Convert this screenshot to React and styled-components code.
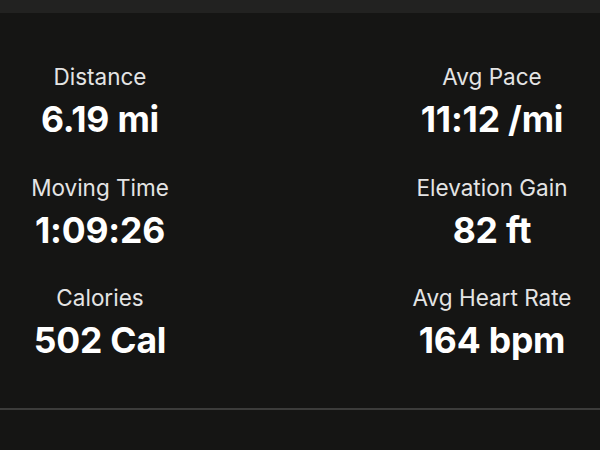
import React from "react";
import styled, { createGlobalStyle } from "styled-components";

const GlobalStyle = createGlobalStyle`
  html, body {
    margin: 0;
    padding: 0;
    background: #151514;
  }
  body {
    font-family: Inter, "Liberation Sans", sans-serif;
    -webkit-font-smoothing: antialiased;
  }
`;

const Page = styled.div`
  width: 600px;
  height: 450px;
  display: flex;
  flex-direction: column;
  background: #151514;
`;

const TopBar = styled.div`
  height: 13px;
  background: #222221;
`;

const Stats = styled.div`
  display: grid;
  grid-template-columns: 200px 200px;
  grid-auto-rows: min-content;
  justify-content: space-between;
  row-gap: 31.5px;
  padding: 50px 8px 0 0;
  height: 395px;
  box-sizing: border-box;
`;

const Stat = styled.div`
  display: flex;
  flex-direction: column;
  align-items: center;
  gap: 7px;
  color: #ffffff;
`;

const Label = styled.div`
  font-size: 22.5px;
  line-height: 28px;
  color: #e4e4e4;
`;

const Value = styled.div`
  font-size: 35.5px;
  line-height: 44px;
  font-weight: 700;
  letter-spacing: -0.2px;
`;

const Divider = styled.div`
  height: 2px;
  background: #3c3c3b;
`;

const stats = [
  ["Distance", "6.19 mi"],
  ["Avg Pace", "11:12 /mi"],
  ["Moving Time", "1:09:26"],
  ["Elevation Gain", "82 ft"],
  ["Calories", "502 Cal"],
  ["Avg Heart Rate", "164 bpm"],
];

export default function App() {
  return (
    <Page>
      <GlobalStyle />
      <TopBar />
      <Stats>
        {stats.map(([label, value]) => (
          <Stat key={label}>
            <Label>{label}</Label>
            <Value>{value}</Value>
          </Stat>
        ))}
      </Stats>
      <Divider />
    </Page>
  );
}
